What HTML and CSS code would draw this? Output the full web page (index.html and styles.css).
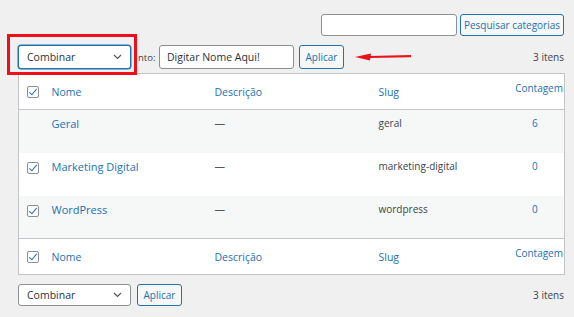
FILE: index.html
```html
<!DOCTYPE html>
<html lang="pt-BR">
<head>
  <meta charset="UTF-8" />
  <meta name="viewport" content="width=device-width, initial-scale=1.0"/>
  <title>Categorias</title>
  <link rel="stylesheet" href="styles.css">
</head>
<body>
  <div class="wrap">
    <div class="search-box">
      <input type="text" class="search-input" />
      <button class="btn">Pesquisar categorias</button>
    </div>

    <div class="tablenav top">
      <div class="select">Combinar
        <svg class="chevron" width="9" height="6" viewBox="0 0 9 6"><path d="M1 1 L4.5 4.5 L8 1" fill="none" stroke="#50575e" stroke-width="1.2"/></svg>
      </div>
      <span class="label-cut">nto:</span>
      <input type="text" class="name-input" value="Digitar Nome Aqui!" />
      <button class="btn">Aplicar</button>
      <svg class="arrow" width="58" height="10" viewBox="0 0 58 10">
        <path d="M14 5 L56 4.2" stroke="#e8141b" stroke-width="2.2" fill="none"/>
        <path d="M0 5 L16 1.5 L15 8.5 Z" fill="#e8141b"/>
      </svg>
      <span class="count">3 itens</span>
      <div class="highlight"></div>
    </div>

    <table class="list-table">
      <colgroup>
        <col class="col-cb"><col class="col-name"><col class="col-desc"><col class="col-slug"><col class="col-num">
      </colgroup>
      <thead>
        <tr>
          <th class="cb"><span class="check checked"></span></th>
          <th>Nome</th>
          <th>Descrição</th>
          <th>Slug</th>
          <th class="num">Contagem</th>
        </tr>
      </thead>
      <tbody>
        <tr class="alt">
          <td class="cb"></td>
          <td class="name">Geral</td>
          <td class="desc">—</td>
          <td class="slug">geral</td>
          <td class="num">6</td>
        </tr>
        <tr>
          <td class="cb"><span class="check checked"></span></td>
          <td class="name">Marketing Digital</td>
          <td class="desc">—</td>
          <td class="slug">marketing-digital</td>
          <td class="num">0</td>
        </tr>
        <tr class="alt">
          <td class="cb"><span class="check checked"></span></td>
          <td class="name">WordPress</td>
          <td class="desc">—</td>
          <td class="slug">wordpress</td>
          <td class="num">0</td>
        </tr>
      </tbody>
      <tfoot>
        <tr>
          <th class="cb"><span class="check checked"></span></th>
          <th>Nome</th>
          <th>Descrição</th>
          <th>Slug</th>
          <th class="num">Contagem</th>
        </tr>
      </tfoot>
    </table>

    <div class="tablenav bottom">
      <div class="select plain">Combinar
        <svg class="chevron" width="9" height="6" viewBox="0 0 9 6"><path d="M1 1 L4.5 4.5 L8 1" fill="none" stroke="#50575e" stroke-width="1.2"/></svg>
      </div>
      <button class="btn">Aplicar</button>
      <span class="count">3 itens</span>
    </div>
  </div>
</body>
</html>
```

FILE: styles.css
```css
body {
  margin: 0;
  background: #f0f0f1;
  font-family: 'Open Sans', 'Noto Sans', sans-serif;
  font-size: 10.5px;
  color: #3c434a;
}

.wrap {
  padding: 14px 10px 0 18px;
}

.search-box {
  display: flex;
  justify-content: flex-end;
  gap: 3px;
}

.search-input {
  width: 136px;
  height: 22px;
  box-sizing: border-box;
  border: 1px solid #8c8f94;
  border-radius: 3px;
  background: #fff;
  margin: 0;
}

.btn {
  height: 22px;
  box-sizing: border-box;
  border: 1px solid #2271b1;
  border-radius: 3px;
  background: #f6f7f7;
  color: #2271b1;
  font-family: 'Open Sans', 'Noto Sans', sans-serif;
  font-size: 10px;
  white-space: nowrap;
  padding: 0 7px;
  margin: 0;
}

.search-box .btn {
  width: 104px;
  padding: 0;
}

.tablenav {
  position: relative;
  display: flex;
  align-items: center;
}

.tablenav.top {
  margin-top: 9px;
  height: 24px;
}

.tablenav.top .btn {
  height: 24px;
  width: 45px;
  padding: 0;
  margin-left: 5px;
}

.select {
  width: 113px;
  height: 24px;
  box-sizing: border-box;
  border: 1px solid #2271b1;
  box-shadow: 0 0 0 0.5px #2271b1;
  border-radius: 3px;
  background: #fff;
  display: flex;
  align-items: center;
  justify-content: space-between;
  padding: 0 8px 0 8px;
  color: #2c3338;
  font-size: 10.5px;
}

.select.plain {
  height: 22px;
  border-color: #8c8f94;
  box-shadow: none;
}

.label-cut {
  margin-left: 7px;
  width: 21px;
  font-size: 9.5px;
  color: #3c434a;
}

.name-input {
  width: 135px;
  height: 24px;
  box-sizing: border-box;
  border: 1px solid #8c8f94;
  border-radius: 3px;
  background: #fff;
  margin: 0;
  padding: 0 7px;
  font-family: 'Open Sans', 'Noto Sans', sans-serif;
  font-size: 10.5px;
  color: #2c3338;
}

.arrow {
  margin-left: 11px;
}

.count {
  margin-left: auto;
  font-size: 10px;
  color: #3c434a;
}

.highlight {
  position: absolute;
  left: -11px;
  top: -11px;
  width: 124px;
  height: 35px;
  border: 3px solid #ee0f18;
}

.list-table {
  margin-top: 4px;
  width: 546px;
  border-collapse: collapse;
  table-layout: fixed;
  background: #fff;
  border: 1px solid #c3c4c7;
}

.col-cb { width: 26px; }
.col-name { width: 163px; }
.col-desc { width: 164px; }
.col-slug { width: 133px; }
.col-num { width: 60px; }

.list-table th {
  height: 36px;
  box-sizing: border-box;
  text-align: left;
  font-weight: normal;
  color: #2271b1;
  font-size: 10.5px;
  padding: 0 7px;
  vertical-align: middle;
}

.list-table th.num {
  vertical-align: top;
  padding: 7px 1px 0 0;
  text-align: right;
  font-size: 10px;
}

.list-table thead tr {
  border-bottom: 1px solid #c3c4c7;
}

.list-table tfoot tr {
  border-top: 1px solid #c3c4c7;
}

.list-table td {
  height: 43px;
  box-sizing: border-box;
    vertical-align: top;
  padding: 6px 7px 0 7px;
}

.list-table tr.alt td {
  background: #f6f7f7;
}

.list-table td.name {
  color: #2271b1;
  font-size: 11px;
}

.list-table td.desc {
  color: #50575e;
}

.list-table td.num {
  text-align: center;
  color: #2271b1;
  font-size: 10px;
  padding-left: 1px;
  padding-right: 0;
}

.list-table td.slug {
  font-size: 10px;
}

.list-table .cb {
  padding: 0 0 0 8px;
}

.list-table td.cb {
  padding-top: 9px;
}

.check {
  display: block;
  width: 12px;
  height: 12px;
  box-sizing: border-box;
  border: 1px solid #8c8f94;
  border-radius: 2px;
  background: #fff;
  position: relative;
}

.check.checked::after {
  content: "";
  position: absolute;
  left: 3px;
  top: 0px;
  width: 3px;
  height: 7px;
  border: solid #2271b1;
  border-width: 0 1.6px 1.6px 0;
  transform: rotate(40deg);
}

.tablenav.bottom {
  margin-top: 9px;
  height: 22px;
}

.tablenav.bottom .btn {
  margin-left: 6px;
  width: 45px;
  padding: 0;
}
```
